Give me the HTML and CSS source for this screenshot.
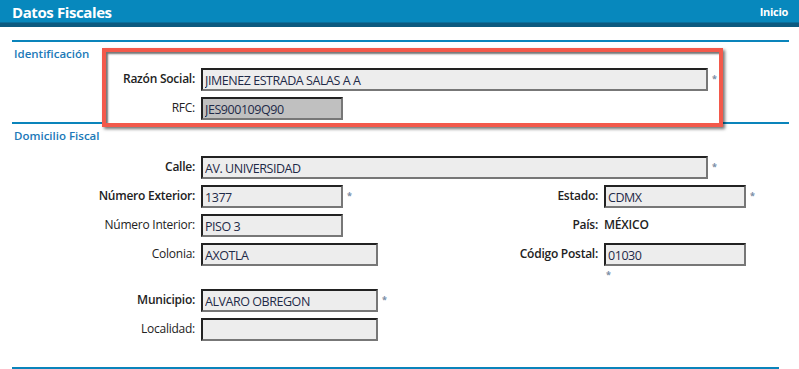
FILE: index.html
```html
<!DOCTYPE html>
<html lang="es">
<head>
    <meta charset="UTF-8">
    <meta name="viewport" content="width=device-width, initial-scale=1.0">
    <title>Datos Fiscales</title>
    <link rel="stylesheet" href="styles.css">
</head>
<body>
    <header class="topbar">
        <h1>Datos Fiscales</h1>
        <a href="#" class="home-link">Inicio</a>
    </header>

    <main class="page">
        <section class="block block-ident">
            <h2 class="block-title">Identificación</h2>
            <div class="highlight">
                <label class="lbl strong" for="razon">Razón Social:</label>
                <div class="field">
                    <input type="text" id="razon" class="txt w-xl" value="JIMENEZ ESTRADA SALAS A A" readonly>
                    <span class="req">*</span>
                </div>
                <label class="lbl" for="rfc">RFC:</label>
                <div class="field">
                    <input type="text" id="rfc" class="txt w-s locked" value="JES900109Q90" readonly>
                </div>
            </div>
        </section>

        <section class="block">
            <h2 class="block-title">Domicilio Fiscal</h2>
            <div class="form-grid">
                <label class="lbl strong" for="calle">Calle:</label>
                <div class="field span-3">
                    <input type="text" id="calle" class="txt w-xl" value="AV. UNIVERSIDAD" readonly>
                    <span class="req">*</span>
                </div>

                <label class="lbl strong" for="numext">Número Exterior:</label>
                <div class="field">
                    <input type="text" id="numext" class="txt w-s" value="1377" readonly>
                    <span class="req">*</span>
                </div>
                <label class="lbl strong" for="estado">Estado:</label>
                <div class="field">
                    <input type="text" id="estado" class="txt w-s" value="CDMX" readonly>
                    <span class="req">*</span>
                </div>

                <label class="lbl" for="numint">Número Interior:</label>
                <div class="field">
                    <input type="text" id="numint" class="txt w-s" value="PISO 3" readonly>
                </div>
                <span class="lbl strong">País:</span>
                <div class="field">
                    <span class="value">MÉXICO</span>
                </div>

                <label class="lbl" for="colonia">Colonia:</label>
                <div class="field">
                    <input type="text" id="colonia" class="txt w-m" value="AXOTLA" readonly>
                </div>
                <label class="lbl strong" for="cp">Código Postal:</label>
                <div class="field stacked">
                    <input type="text" id="cp" class="txt w-s" value="01030" readonly>
                    <span class="req">*</span>
                </div>

                <label class="lbl strong" for="municipio">Municipio:</label>
                <div class="field span-3">
                    <input type="text" id="municipio" class="txt w-m" value="ALVARO OBREGON" readonly>
                    <span class="req">*</span>
                </div>

                <label class="lbl" for="localidad">Localidad:</label>
                <div class="field span-3">
                    <input type="text" id="localidad" class="txt w-m" value="" readonly>
                </div>
            </div>
        </section>

        <div class="end-line"></div>
    </main>
</body>
</html>
```

FILE: styles.css
```css
body {
    margin: 0;
    font-family: "Open Sans", Arial, sans-serif;
    font-size: 12px;
    color: #222;
    background: #fff;
}

.topbar {
    display: flex;
    align-items: center;
    justify-content: space-between;
    height: 23px;
    padding: 0 11px 0 12px;
    background: #0788bd;
    border-bottom: 4px solid #0c5a80;
    box-shadow: inset 0 -1px 0 #0a6f9c;
}

.topbar h1 {
    margin: 0;
    font-size: 15px;
    font-weight: bold;
    letter-spacing: -0.4px;
    color: #fff;
}

.home-link {
    font-size: 11px;
    font-weight: bold;
    color: #fff;
    text-decoration: none;
    letter-spacing: -0.3px;
}

.page {
    padding: 13px 10px 0 12px;
}

.block {
    border-top: 2px solid #0a84bb;
}

.block-ident {
    display: grid;
    grid-template-columns: 90px 621px;
    align-items: start;
}

.block-title {
    margin: 0;
    padding: 4px 0 0 2px;
    font-size: 11.5px;
    line-height: 16px;
    font-weight: 600;
    color: #2079b8;
}

.highlight {
    position: relative;
    z-index: 1;
    display: grid;
    grid-template-columns: 89px 1fr;
    column-gap: 6px;
    row-gap: 6px;
    margin: 6px 0 -5px 0;
    padding: 16px 0 3px 0;
    height: 79px;
    box-sizing: border-box;
    background: #fff;
    border: 4px solid #f3594b;
    box-shadow: 2px 2px 3px rgba(0, 0, 0, 0.55), inset 2px 2px 2px rgba(0, 0, 0, 0.55);
}

.form-grid {
    display: grid;
    grid-template-columns: 183px 260px 131px 1fr;
    column-gap: 6px;
    row-gap: 6px;
    margin-top: 12px;
}

.lbl {
    padding-top: 3px;
    text-align: right;
    line-height: 16px;
    letter-spacing: -0.25px;
    color: #222;
}

.lbl.strong {
    font-weight: 600;
}

.field {
    display: flex;
    align-items: flex-start;
    gap: 4px;
}

.field.stacked {
    flex-direction: column;
    gap: 0;
}

.span-3 {
    grid-column: 2 / span 3;
}

.txt {
    height: 23px;
    box-sizing: border-box;
    padding: 1px 2px 0 2px;
    font-family: "Open Sans", Arial, sans-serif;
    font-size: 12.5px;
    letter-spacing: -0.45px;
    color: #1e2a48;
    background: #ededed;
    border: 2px solid;
    border-color: #222 #777 #777 #222;
    border-radius: 0;
    outline: none;
}

.txt.locked {
    background: #c0c0c0;
}

.w-xl {
    width: 507px;
}

.w-m {
    width: 177px;
}

.w-s {
    width: 142px;
}

.req {
    padding-top: 6px;
    font-size: 9px;
    line-height: 9px;
    font-weight: bold;
    color: #7b8ea6;
}

.field.stacked .req {
    height: 17px;
    padding: 4px 0 0 2px;
    box-sizing: border-box;
}

.value {
    padding-top: 3px;
    line-height: 16px;
    font-weight: 600;
    letter-spacing: -0.2px;
    color: #222;
}

.end-line {
    width: 767px;
    height: 2px;
    margin-top: 26px;
    background: #0a84bb;
}
```
